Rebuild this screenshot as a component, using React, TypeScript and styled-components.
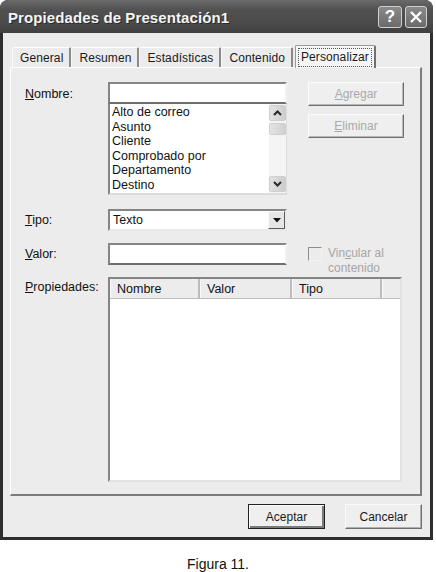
import * as React from 'react';
import styled, { createGlobalStyle } from 'styled-components';

const GlobalStyle = createGlobalStyle`
  html, body {
    margin: 0;
    padding: 0;
    background: #ffffff;
  }
  body {
    font-family: 'Liberation Sans', Arial, sans-serif;
    font-size: 12px;
    color: #111;
  }
`;

const tabs = ['General', 'Resumen', 'Estadísticas', 'Contenido', 'Personalizar'];
const fields = [
  'Alto de correo',
  'Asunto',
  'Cliente',
  'Comprobado por',
  'Departamento',
  'Destino',
];
const columns = [
  { label: 'Nombre', width: 90 },
  { label: 'Valor', width: 92 },
  { label: 'Tipo', width: 90 },
];

function Chevron({ up }: { up?: boolean }) {
  return (
    <svg width="9" height="6" viewBox="0 0 9 6">
      <path
        d={up ? 'M1 5 L4.5 1.5 L8 5' : 'M1 1 L4.5 4.5 L8 1'}
        fill="none"
        stroke="#2a2a2a"
        strokeWidth="2"
      />
    </svg>
  );
}

export default function App() {
  const [active, setActive] = React.useState(4);

  return (
    <Page>
      <GlobalStyle />
      <Window>
        <TitleBar>
          <Title>Propiedades de Presentación1</Title>
          <TitleButtons>
            <CaptionButton $wide>?</CaptionButton>
            <CaptionButton>
              <svg width="14" height="14" viewBox="0 0 14 14">
                <path d="M2 2 L12 12 M12 2 L2 12" stroke="#fff" strokeWidth="2.4" />
              </svg>
            </CaptionButton>
          </TitleButtons>
        </TitleBar>

        <Body>
          <TabStrip>
            {tabs.map((t, i) => (
              <Tab key={t} $active={i === active} onClick={() => setActive(i)}>
                {i === active ? <Focus>{t}</Focus> : t}
              </Tab>
            ))}
          </TabStrip>

          <Panel>
            <Form>
              <Label>
                <u>N</u>ombre:
              </Label>
              <NameStack>
                <TextBox />
                <ListBox>
                  <ListItems>
                    {fields.map((f) => (
                      <div key={f}>{f}</div>
                    ))}
                  </ListItems>
                  <ScrollBar>
                    <ScrollArrow>
                      <Chevron up />
                    </ScrollArrow>
                    <Thumb />
                    <Track />
                    <ScrollArrow>
                      <Chevron />
                    </ScrollArrow>
                  </ScrollBar>
                </ListBox>
              </NameStack>
              <ButtonStack>
                <PushButton disabled>
                  <u>A</u>gregar
                </PushButton>
                <PushButton disabled>
                  <u>E</u>liminar
                </PushButton>
              </ButtonStack>

              <Label $top={4}>
                <u>T</u>ipo:
              </Label>
              <Select>
                <span>Texto</span>
                <DropButton>
                  <svg width="8" height="5" viewBox="0 0 8 5">
                    <path d="M0 0 H8 L4 4.5 Z" fill="#111" />
                  </svg>
                </DropButton>
              </Select>
              <div />

              <Label $top={4}>
                <u>V</u>alor:
              </Label>
              <TextBox $height={22} />
              <LinkOption>
                <CheckBox />
                <span>
                  Vin<u>c</u>ular al
                  <br />
                  contenido
                </span>
              </LinkOption>

              <Label $top={3}>
                <u>P</u>ropiedades:
              </Label>
              <ListView>
                <HeaderRow>
                  {columns.map((c) => (
                    <HeaderCell key={c.label} $width={c.width}>
                      {c.label}
                    </HeaderCell>
                  ))}
                  <HeaderCell $width={0} />
                </HeaderRow>
              </ListView>
            </Form>
          </Panel>

          <Footer>
            <DialogButton $default>Aceptar</DialogButton>
            <DialogButton>Cancelar</DialogButton>
          </Footer>
        </Body>
      </Window>
      <Caption>Figura 11.</Caption>
    </Page>
  );
}

const Page = styled.div`
  display: flex;
  flex-direction: column;
  align-items: flex-start;
  width: 436px;
`;

const Window = styled.div`
  width: 433px;
  box-sizing: border-box;
  display: flex;
  flex-direction: column;
  background: #2e2e2e;
  border-radius: 8px 8px 0 0;
  padding: 0 3px 3px 3px;
  overflow: hidden;
`;

const TitleBar = styled.div`
  height: 33px;
  margin: 0 -3px;
  padding: 0 6px 0 8px;
  display: flex;
  align-items: center;
  justify-content: space-between;
  background: linear-gradient(180deg, #6a6a6a 0%, #515151 30%, #4a4a4a 70%, #3f3f3f 100%);
  border-radius: 8px 8px 0 0;
`;

const Title = styled.div`
  color: #f4f4f4;
  font-family: 'Liberation Sans', Arial, sans-serif;
  font-weight: bold;
  font-size: 15px;
  letter-spacing: 0.1px;
  padding-top: 2px;
  text-shadow: 1px 1px 0 #2a2a2a;
`;

const TitleButtons = styled.div`
  display: flex;
  gap: 3px;
`;

const CaptionButton = styled.div<{ $wide?: boolean }>`
  width: ${(p) => (p.$wide ? 24 : 22)}px;
  height: 22px;
  box-sizing: border-box;
  border: 1px solid #d0d0d0;
  border-radius: 3px;
  background: linear-gradient(180deg, #8a8a8a, #6a6a6a);
  color: #fff;
  font-weight: bold;
  font-size: 17px;
  display: flex;
  align-items: center;
  justify-content: center;
`;

const Body = styled.div`
  background: #ececec;
  display: flex;
  flex-direction: column;
  padding: 11px 5px 8px 7px;
`;

const TabStrip = styled.div`
  display: flex;
  align-items: flex-end;
  padding-left: 2px;
  height: 23px;
`;

const Tab = styled.div<{ $active?: boolean }>`
  box-sizing: border-box;
  height: ${(p) => (p.$active ? 23 : 20)}px;
  padding: ${(p) => (p.$active ? '0 3px' : '0 6px 0 7px')};
  margin-left: ${(p) => (p.$active ? 2 : 0)}px;
  display: flex;
  align-items: center;
  font-size: 12px;
  letter-spacing: 0.1px;
  color: #1a1a1a;
  background: ${(p) => (p.$active ? '#f6f6f6' : '#ececec')};
  border-top: 1px solid ${(p) => (p.$active ? '#9a9a9a' : '#ffffff')};
  border-left: 1px solid ${(p) => (p.$active ? '#9a9a9a' : '#f8f8f8')};
  border-right: 2px solid ${(p) => (p.$active ? '#707070' : '#8a8a8a')};
  border-radius: 2px 2px 0 0;
  position: relative;
  margin-bottom: ${(p) => (p.$active ? -1 : 0)}px;
  z-index: ${(p) => (p.$active ? 1 : 0)};
  cursor: default;
`;

const Focus = styled.span`
  outline: 1px dotted #555;
  padding: 1px 2px 2px 2px;
`;

const Panel = styled.div`
  width: 412px;
  box-sizing: border-box;
  background: #ececec;
  border-top: 1px solid #ffffff;
  border-left: 1px solid #ffffff;
  border-right: 2px solid #7c7c7c;
  border-bottom: 2px solid #7c7c7c;
  padding: 14px 0 12px 14px;
`;

const Form = styled.div`
  display: grid;
  grid-template-columns: 83px 200px 96px;
  row-gap: 12px;
  align-items: start;
`;

const Label = styled.div<{ $top?: number }>`
  font-size: 12.5px;
  padding-top: ${(p) => p.$top ?? 5}px;
  color: #111;
`;

const NameStack = styled.div`
  display: flex;
  flex-direction: column;
  width: 179px;
  margin-bottom: 2px;
`;

const TextBox = styled.div<{ $height?: number }>`
  width: 179px;
  height: ${(p) => p.$height ?? 22}px;
  box-sizing: border-box;
  background: #fff;
  border: 2px solid;
  border-color: #858585 #f2f2f2 #6e6e6e #858585;
`;

const ListBox = styled.div`
  height: 91px;
  box-sizing: border-box;
  background: #fff;
  border-left: 2px solid #858585;
  border-right: 1px solid #dcdcdc;
  border-bottom: 2px solid #dcdcdc;
  display: flex;
`;

const ListItems = styled.div`
  flex: 1;
  padding: 1px 0 0 2px;
  font-size: 12.5px;
  line-height: 14.5px;
  overflow: hidden;
`;

const ScrollBar = styled.div`
  width: 17px;
  display: flex;
  flex-direction: column;
  background: #f4f4f4;
  padding: 1px 0;
`;

const ScrollArrow = styled.div`
  height: 16px;
  box-sizing: border-box;
  border: 1px solid #cfcfcf;
  border-radius: 2px;
  background: linear-gradient(90deg, #e2e2e2, #cdcdcd);
  display: flex;
  align-items: center;
  justify-content: center;
`;

const Thumb = styled.div`
  height: 10px;
  margin-top: 2px;
  border: 1px solid #cfcfcf;
  border-radius: 2px;
  background: linear-gradient(90deg, #e4e4e4, #d0d0d0);
`;

const Track = styled.div`
  flex: 1;
`;

const ButtonStack = styled.div`
  display: flex;
  flex-direction: column;
  gap: 8px;
`;

const PushButton = styled.button`
  width: 96px;
  height: 24px;
  box-sizing: border-box;
  font-family: 'Liberation Sans', Arial, sans-serif;
  font-size: 12px;
  color: #a9a9a9;
  background: #efefef;
  border: 1px solid;
  border-color: #fafafa #6f6f6f #6f6f6f #fafafa;
  box-shadow: inset -1px -1px 0 #b8b8b8;
  padding: 0;
  u {
    text-decoration-color: #a9a9a9;
  }
`;

const Select = styled.div`
  width: 179px;
  height: 22px;
  box-sizing: border-box;
  background: #fff;
  border: 2px solid;
  border-color: #858585 #e8e8e8 #e8e8e8 #858585;
  display: flex;
  align-items: center;
  justify-content: space-between;
  font-size: 12.5px;
  padding-left: 3px;
`;

const DropButton = styled.div`
  width: 17px;
  height: 18px;
  box-sizing: border-box;
  background: #e6e6e6;
  border: 1px solid;
  border-color: #fafafa #5a5a5a #5a5a5a #fafafa;
  display: flex;
  align-items: center;
  justify-content: center;
`;

/* sits beside the Valor box; its second line hangs below the row */
const LinkOption = styled.div`
  height: 22px;
  display: flex;
  align-items: flex-start;
  gap: 6px;
  padding-top: 3px;
  box-sizing: border-box;
  overflow: visible;
  font-size: 12px;
  line-height: 15px;
  color: #a6a6a6;
  u {
    text-decoration-color: #a6a6a6;
  }
`;

const CheckBox = styled.div`
  width: 14px;
  height: 14px;
  margin-top: 1px;
  flex-shrink: 0;
  box-sizing: border-box;
  border: 1px solid;
  border-color: #8c8c8c #f2f2f2 #f2f2f2 #8c8c8c;
  background: #ececec;
`;

const ListView = styled.div`
  grid-column: 2 / span 2;
  width: 294px;
  height: 205px;
  box-sizing: border-box;
  background: #fff;
  border: 2px solid;
  border-color: #858585 #e2e2e2 #e2e2e2 #858585;
`;

const HeaderRow = styled.div`
  display: flex;
  height: 19px;
  background: #ececec;
  border-bottom: 1px solid #bdbdbd;
`;

const HeaderCell = styled.div<{ $width: number }>`
  box-sizing: border-box;
  ${(p) => (p.$width ? `width: ${p.$width}px;` : 'flex: 1;')}
  padding: 3px 0 0 6px;
  font-size: 12.5px;
  color: #111;
  border-right: 2px solid #bcbcbc;
  border-left: 1px solid #fafafa;
  &:last-child {
    border-right: none;
  }
`;

const Footer = styled.div`
  display: flex;
  justify-content: flex-end;
  gap: 20px;
  padding: 8px 3px 0 0;
`;

const DialogButton = styled.button<{ $default?: boolean }>`
  width: 77px;
  height: 25px;
  box-sizing: border-box;
  font-family: 'Liberation Sans', Arial, sans-serif;
  font-size: 12px;
  color: #1a1a1a;
  background: #efefef;
  padding: 0;
  border: 1px solid;
  border-color: ${(p) => (p.$default ? '#222' : '#fafafa #6f6f6f #6f6f6f #fafafa')};
  box-shadow: ${(p) =>
    p.$default
      ? 'inset 1px 1px 0 #fafafa, inset -2px -2px 0 #7a7a7a'
      : 'inset -1px -1px 0 #b0b0b0'};
`;

const Caption = styled.div`
  align-self: center;
  margin-top: 16px;
  font-family: 'Liberation Sans', Arial, sans-serif;
  font-size: 14px;
  line-height: 16px;
  color: #111;
`;
